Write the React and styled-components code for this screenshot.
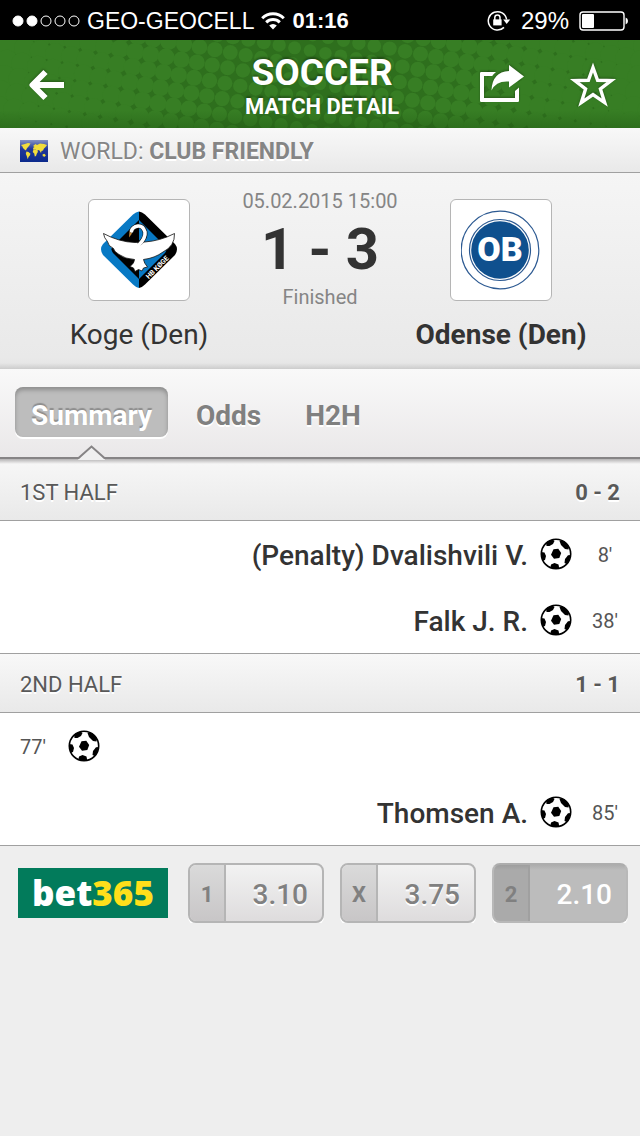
import styled, { createGlobalStyle, css } from "styled-components";

const GlobalStyle = createGlobalStyle`
  * {
    box-sizing: border-box;
  }
  body {
    margin: 0;
    background: #eeeeee;
    font-family: Roboto, "Liberation Sans", sans-serif;
    color: #333333;
  }
  button {
    font-family: inherit;
    border: 0;
    padding: 0;
    background: none;
    cursor: pointer;
  }
`;

const StatusBar = styled.div`
  display: flex;
  align-items: center;
  justify-content: space-between;
  height: 40px;
  padding: 2px 11px 0 12px;
  background: #000000;
  color: #ffffff;
  font-family: "Liberation Sans", sans-serif;
`;

const StatusGroup = styled.div`
  display: flex;
  align-items: center;
  gap: ${(props) => props.$gap}px;
  font-size: ${(props) => props.$size}px;
`;

const Clock = styled.strong`
  font-size: 22px;
`;

const Header = styled.header`
  display: grid;
  grid-template-columns: 1fr auto 1fr;
  align-items: center;
  position: relative;
  height: 88px;
  padding: 2px 22px 0 26px;
  background: #2e6f1d;
  overflow: hidden;
`;

const Halftone = styled.svg`
  position: absolute;
  inset: 0;
  width: 100%;
  height: 100%;
`;

const HeaderTitle = styled.h1`
  position: relative;
  margin: 0;
  padding-top: 6px;
  text-align: center;
  color: #ffffff;
  font-size: 37px;
  line-height: 38px;
  font-weight: 700;
  text-shadow: 0 -2px 2px rgba(0, 0, 0, 0.3);
`;

const HeaderSubtitle = styled.span`
  display: block;
  font-size: 22px;
  line-height: 30px;
  font-weight: 700;
`;

const HeaderActions = styled.div`
  display: flex;
  justify-content: ${(props) => (props.$end ? "flex-end" : "flex-start")};
  gap: 44px;
  position: relative;
`;

const IconButton = styled.button`
  display: flex;
  align-items: center;
  filter: drop-shadow(0 -1px 1px rgba(0, 0, 0, 0.3));
`;

const barGradient = css`
  background: linear-gradient(#f8f8f8, #e9e9e9);
  border-bottom: 1px solid #a0a0a0;
  text-shadow: 0 2px 0 #ffffff;
`;

const League = styled.div`
  ${barGradient}
  display: flex;
  align-items: center;
  gap: 12px;
  height: 45px;
  padding: 2px 20px 0;
  color: #858585;
  font-size: 23px;
`;

const Match = styled.section`
  display: grid;
  grid-template-columns: 1fr 160px 1fr;
  height: 196px;
  padding: 14px 38px 0;
  background: linear-gradient(#f5f5f5, #e9e9e9 94%, #e6e6e6 97%, #cccccc);
`;

const Team = styled.div`
  display: flex;
  flex-direction: column;
  align-items: center;
  padding-top: 12px;
  gap: 14px;
  white-space: nowrap;
  font-size: 28px;
  line-height: 40px;
  font-weight: ${(props) => (props.$winner ? 700 : 400)};
`;

const Crest = styled.div`
  display: flex;
  align-items: center;
  justify-content: center;
  width: 102px;
  height: 102px;
  background: #ffffff;
  border: 1px solid #b5b5b5;
  border-radius: 6px;
`;

const Result = styled.div`
  display: flex;
  flex-direction: column;
  align-items: center;
  white-space: nowrap;
  color: #858585;
  font-size: 20px;
  line-height: 28px;
`;

const Score = styled.strong`
  color: #333333;
  font-size: 58px;
  line-height: 68px;
`;

const Tabs = styled.nav`
  display: flex;
  align-items: flex-start;
  gap: 28px;
  position: relative;
  height: 90px;
  padding: 18px 15px 0;
  background: linear-gradient(#f9f9f9, #eae8e9);
  border-bottom: 2px solid #868485;
`;

const Tab = styled.button`
  height: 50px;
  padding: ${(props) => (props.$active ? "6px 16px 0" : "6px 0 0")};
  margin-right: ${(props) => (props.$active ? 0 : 16)}px;
  border-radius: 8px;
  color: #808080;
  font-size: 28px;
  font-weight: 700;
  text-shadow: 0 2px 0 #ffffff;
  ${(props) =>
    props.$active &&
    css`
      color: #ffffff;
      background: #bdbdbd;
      box-shadow: inset 0 3px 4px rgba(0, 0, 0, 0.25), 0 2px 0 #ffffff;
      text-shadow: 0 -2px 1px rgba(0, 0, 0, 0.25);
    `}
`;

const TabPointer = styled.svg`
  position: absolute;
  left: 76px;
  bottom: -6px;
`;

const HalfBar = styled.h2`
  ${barGradient}
  display: flex;
  align-items: center;
  justify-content: space-between;
  height: ${(props) => (props.$first ? 62 : 60)}px;
  margin: 0;
  padding: ${(props) => (props.$first ? 5 : 2)}px 20px 0;
  color: #595959;
  font-size: 22px;
  font-weight: 400;
  ${(props) =>
    props.$first
      ? css`
          background: linear-gradient(#b4b2b3, #f6f6f6 5px, #e9e9e9);
        `
      : css`
          border-top: 1px solid #a0a0a0;
        `}
`;

const Events = styled.ul`
  margin: 0;
  padding: 0;
  list-style: none;
  background: #ffffff;
`;

const EventRow = styled.li`
  display: flex;
  flex-direction: ${(props) => (props.$away ? "row-reverse" : "row")};
  align-items: center;
  height: 66px;
  padding: 0 20px;
  gap: 12px;
`;

const Minute = styled.span`
  width: ${(props) => (props.$away ? 30 : 36)}px;
  margin-left: ${(props) => (props.$away ? 6 : 0)}px;
  padding-top: 2px;
  text-align: ${(props) => (props.$away ? "center" : "left")};
  color: #555555;
  font-size: 20px;
`;

const Player = styled.span`
  padding-top: 2px;
  font-size: 28px;
  font-weight: 500;
`;

const Odds = styled.section`
  display: flex;
  align-items: center;
  gap: 16px;
  padding: 17px 12px 0 18px;
  border-top: 1px solid #a0a0a0;
`;

const Bookmaker = styled.a`
  display: flex;
  align-items: center;
  justify-content: center;
  flex: none;
  width: 150px;
  height: 50px;
  margin-right: 4px;
  background: #027b5b;
  color: #ffffff;
  font-family: "Open Sans", "Noto Sans", sans-serif;
  font-size: 35px;
  font-weight: 800;
  line-height: 48px;
  text-decoration: none;
`;

const BookmakerAccent = styled.span`
  color: #ffdf1b;
`;

const OddButton = styled.button`
  display: flex;
  flex: 1;
  height: 60px;
  overflow: hidden;
  border: 2px solid #b5b5b5;
  border-radius: 8px;
  background: linear-gradient(#f2f2f2, #dedcdd);
  box-shadow: 0 2px 0 #ffffff;
  color: #808080;
  text-shadow: 0 2px 0 #ffffff;
  ${(props) =>
    props.$picked &&
    css`
      border-color: #adadad #b8b8b8 #b8b8b8;
      background: linear-gradient(#adadad, #bcbcbc 5px);
      color: #ffffff;
      text-shadow: none;
    `}
`;

const OddLabel = styled.span`
  display: flex;
  align-items: center;
  justify-content: center;
  width: 36px;
  height: 100%;
  padding-top: 2px;
  border-right: 2px solid ${(props) => (props.$picked ? "#a0a0a0" : "#b5b5b5")};
  background: ${(props) =>
    props.$picked
      ? "linear-gradient(#9e9e9e, #aaaaaa 5px)"
      : "linear-gradient(#dadada, #c8c6c7)"};
  color: #808080;
  font-size: 22px;
  font-weight: 700;
  text-shadow: none;
`;

const OddValue = styled.span`
  flex: 1;
  padding: 2px 14px 0 0;
  text-align: right;
  align-self: center;
  font-size: 28px;
  font-weight: 500;
`;

// Rotated square lattice, dots grow towards the sides until they merge
const dots = [];
for (let i = -26; i <= 26; i++) {
  for (let j = -10; j <= 10; j++) {
    const x = 320 + i * 15.4 - j * 2.7;
    const y = 44 + i * 2.7 + j * 15.4;
    if (x > -12 && x < 652 && y > -12 && y < 100) {
      const d = Math.abs(x - 320) / 320;
      dots.push({ x, y, r: 6.2 + 4.9 * Math.pow(d, 1.1) });
    }
  }
}

const HeaderPattern = () => (
  <Halftone viewBox="0 0 640 88" preserveAspectRatio="xMidYMid slice" aria-hidden="true">
    <defs>
      <linearGradient id="shade" x1="0" y1="0" x2="0" y2="1">
        <stop offset="0.8" stopColor="#1d5210" stopOpacity="0" />
        <stop offset="1" stopColor="#1d5210" stopOpacity="0.35" />
      </linearGradient>
    </defs>
    {dots.map((dot) => (
      <circle key={`${dot.x}-${dot.y}`} cx={dot.x} cy={dot.y} r={dot.r} fill="#377e24" />
    ))}
    <rect width="640" height="88" fill="url(#shade)" />
  </Halftone>
);

const SignalDots = () => (
  <svg width="68" height="12" viewBox="0 0 68 12" fill="#fff" stroke="#fff">
    <circle cx="6" cy="6" r="5" />
    <circle cx="20" cy="6" r="5" />
    <circle cx="34" cy="6" r="5" fill="none" />
    <circle cx="48" cy="6" r="5" fill="none" />
    <circle cx="62" cy="6" r="5" fill="none" />
  </svg>
);

const WifiIcon = () => (
  <svg width="24" height="18" viewBox="0 0 24 18" fill="none" stroke="#fff" strokeWidth="3">
    <path d="M1.2 6.2a15.4 15.4 0 0 1 21.6 0" />
    <path d="M5.2 10.4a9.7 9.7 0 0 1 13.6 0" />
    <path d="M12 17.6 8.2 13.6a5.5 5.5 0 0 1 7.6 0z" fill="#fff" stroke="none" />
  </svg>
);

const LockIcon = () => (
  <svg width="24" height="22" viewBox="0 0 24 22" fill="none" stroke="#fff" strokeWidth="1.5">
    <path d="M19.6 9.5A9.2 9.2 0 1 0 17 17.4" />
    <path d="M16.2 9.5h7L19.7 14z" fill="#fff" stroke="none" />
    <rect x="6.2" y="9.4" width="8.4" height="6" fill="#fff" stroke="none" />
    <path d="M7.8 10V7.6a2.6 2.6 0 0 1 5.2 0V10" />
  </svg>
);

const BatteryIcon = () => (
  <svg width="50" height="20" viewBox="0 0 50 20">
    <rect x="1" y="1" width="44" height="18" rx="3" fill="none" stroke="#fff" strokeWidth="1.4" />
    <rect x="3" y="3" width="12" height="14" rx="1" fill="#fff" />
    <path d="M46.6 6.5q2.4.6 2.4 3.5t-2.4 3.5z" fill="#fff" />
  </svg>
);

const BackIcon = () => (
  <svg width="40" height="36" viewBox="0 0 40 36" fill="none" stroke="#fff" strokeWidth="6">
    <path d="M7 18h31" />
    <path d="M19.5 5 6.500 18l13 13" strokeLinejoin="round" />
  </svg>
);

const ShareIcon = () => (
  <svg width="46" height="40" viewBox="0 0 46 40">
    <path
      d="M18 7H3.200A1.200 1.200 0 0 0 2 8.200v27.600A1.200 1.200 0 0 0 3.200 37h36.600a1.200 1.200 0 0 0 1.200-1.200V22.500l-4 3.600V33H6V11h8.200Q15.500 8.800 18 7z"
      fill="#fff"
    />
    <path d="M31 0 46 11.500 31 22.500v-6q-13-1-17.500 9Q14 7 31 6z" fill="#fff" />
  </svg>
);

const StarIcon = () => (
  <svg width="50" height="48" viewBox="0 0 50 48">
    <path
      d="M25 6.500 29.600 19.300 43.200 19.600 32.400 27.900 36.700 41.600 25 33.600 13.300 41.600 17.600 27.900 6.800 19.600 20.400 19.300z"
      fill="none"
      stroke="#fff"
      strokeWidth="3.4"
    />
  </svg>
);

const WorldFlag = () => (
  <svg width="28" height="22" viewBox="0 0 28 22">
    <defs>
      <linearGradient id="sea" x1="0" y1="0" x2="0" y2="1">
        <stop offset="0" stopColor="#8793c4" />
        <stop offset="0.4" stopColor="#22389a" />
        <stop offset="1" stopColor="#0b2a8c" />
      </linearGradient>
    </defs>
    <rect width="28" height="22" fill="url(#sea)" />
    <g fill="#f2dc3c">
      <path d="M1 5l3-.8L8 3l2.500.5L9 6 8 7 6.500 9 6 10.500l-1.500-1L3 8 2.500 6.500z" />
      <path d="M6.500 11.500l2 .5 2 1.800-.7 1.700-1.300 1.500-.7 2.200-1-3-1-2.500z" />
      <path d="M13 6l2.500-2 1.500 1 3-1.500 4 .5 3 1-1.500 2-1.500 1.500-1 2-1.500.5-.5 2-1.500-2.500-1.200-.5-1.300 1-1.500-1.500-2 .3-.5-1.800 1.500-1z" />
      <path d="M13.500 9.500l3 .3 1.500 2-1.200 2-.8 2.200-1.200.5-.6-3-1.500-1.500z" />
      <path d="M22.500 14.500l1.800-.8 1.500 1.500-1 1.500-2-.5z" />
    </g>
  </svg>
);

const KogeCrest = () => (
  <svg width="80" height="80" viewBox="0 0 80 80" role="img" aria-label="HB Koge">
    <path d="M40 1.500Q37 2 34 4.500L4 34Q0 39 4 45L34 74.500Q37 77.500 40 78z" fill="#0879c4" />
    <path d="M40 1.500Q43 2 46 4.500L76 34Q80 39 76 45L46 74.500Q43 77.500 40 78z" fill="#000" />
    <path d="M40 10V69L14 43Q11 39 14 36z" fill="#000" />
    <path d="M40 10V69L66 43Q69 39 66 36z" fill="#0879c4" />
    <path
      d="M4.500 23.500Q20 32 36 32.500L45.500 32Q61 31 75.500 23.500Q76 36 64 42Q56 48 44.500 49.500Q45 53 48.500 57L44.500 58 43 61 39.500 59.500 36 61.500 34.500 58 31 56.500Q35.500 53 35.500 49.500Q26 49 20 44.500Q15 41.500 14.500 38.500Q9 36 8.500 31.500Q5 28 4.500 23.500z"
      fill="#fff"
      stroke="#111"
      strokeWidth="0.8"
    />
    <g fill="none" strokeLinecap="round">
      <path d="M41 33Q47 28 46 22Q44 15.500 39 16Q33.500 17 32.500 21" stroke="#111" strokeWidth="4.800" />
      <path d="M39 36Q47 28 46 22Q44 15.500 39 16Q33.500 17 32.500 21" stroke="#fff" strokeWidth="3.600" />
    </g>
    <path d="M30.500 21.500l2.500 2-3 4z" fill="#c98b3a" />
    <text
      x="60"
      y="59"
      fill="#fff"
      fontSize="7"
      fontWeight="700"
      textAnchor="middle"
      transform="rotate(-45 60 59)"
    >
      HB KØGE
    </text>
  </svg>
);

const OdenseCrest = () => (
  <svg width="80" height="80" viewBox="0 0 80 80" role="img" aria-label="OB">
    <g fill="none" stroke="#2d5a92">
      <circle cx="39" cy="40" r="38.8" strokeWidth="1.2" />
      <circle cx="39" cy="40" r="30.5" strokeWidth="1.2" />
    </g>
    <circle cx="39" cy="40" r="28.8" fill="#0f508e" />
    <text x="39" y="51" fill="#fff" fontFamily="Roboto" fontSize="34" fontWeight="900" textAnchor="middle">
      OB
    </text>
  </svg>
);

const Ball = () => (
  <svg width="32" height="32" viewBox="0 0 32 32" role="img" aria-label="Goal">
    <defs>
      <clipPath id="ball">
        <circle cx="16" cy="16" r="15" />
      </clipPath>
    </defs>
    <circle cx="16" cy="16" r="14.5" fill="#fff" />
    <g fill="#000" clipPath="url(#ball)">
      <path d="M13.500 11.200 18.300 10.800 21.200 15 19.300 20 14 20.800 11 16.800z" />
      <path d="M6 4 12 1l2.500 2-1.500 3-3.500 2-3 0z" />
      <path d="M19.500 3l4-2 5.500 7-.5 3.500-3.500-.5-4-4z" />
      <path d="M0 14l4.500.5 1.500 3.500-1 4L2 23z" />
      <path d="M31 17l-3 .2-3 3.800-.5 4 3 1.500z" />
      <path d="M10.500 29l.5-2.500 3.500-1.500 4 1.500.5 2.500V31H10z" />
    </g>
    <circle cx="16" cy="16" r="14.7" fill="none" stroke="#000" strokeWidth="1.6" />
  </svg>
);

const halves = [
  {
    name: "1ST HALF",
    score: "0 - 2",
    events: [
      { minute: "8'", player: "(Penalty) Dvalishvili V.", away: true },
      { minute: "38'", player: "Falk J. R.", away: true },
    ],
  },
  {
    name: "2ND HALF",
    score: "1 - 1",
    events: [
      { minute: "77'", player: "", away: false },
      { minute: "85'", player: "Thomsen A.", away: true },
    ],
  },
];

const odds = [
  { label: "1", value: "3.10" },
  { label: "X", value: "3.75" },
  { label: "2", value: "2.10", picked: true },
];

const App = () => {
  return (
    <>
      <GlobalStyle />
      <StatusBar>
        <StatusGroup $gap={7} $size={23}>
          <SignalDots />
          <span>GEO-GEOCELL</span>
          <WifiIcon />
          <Clock>01:16</Clock>
        </StatusGroup>
        <StatusGroup $gap={10} $size={24}>
          <LockIcon />
          <span>29%</span>
          <BatteryIcon />
        </StatusGroup>
      </StatusBar>
      <Header>
        <HeaderPattern />
        <HeaderActions>
          <IconButton aria-label="Back">
            <BackIcon />
          </IconButton>
        </HeaderActions>
        <HeaderTitle>
          SOCCER
          <HeaderSubtitle>MATCH DETAIL</HeaderSubtitle>
        </HeaderTitle>
        <HeaderActions $end>
          <IconButton aria-label="Share">
            <ShareIcon />
          </IconButton>
          <IconButton aria-label="Add to favourites">
            <StarIcon />
          </IconButton>
        </HeaderActions>
      </Header>
      <main>
        <League>
          <WorldFlag />
          <span>
            WORLD: <strong>CLUB FRIENDLY</strong>
          </span>
        </League>
        <Match>
          <Team>
            <Crest>
              <KogeCrest />
            </Crest>
            Koge (Den)
          </Team>
          <Result>
            <span>05.02.2015 15:00</span>
            <Score>1 - 3</Score>
            <span>Finished</span>
          </Result>
          <Team $winner>
            <Crest>
              <OdenseCrest />
            </Crest>
            Odense (Den)
          </Team>
        </Match>
        <Tabs>
          <Tab $active>Summary</Tab>
          <Tab>Odds</Tab>
          <Tab>H2H</Tab>
          <TabPointer width="32" height="18" viewBox="0 0 32 18">
            <path d="M2 14.500 15.500 2 29 14.500V15H2z" fill="#f0f0f0" />
            <path d="M2 13.500 15.500 1.500 29 13.500" fill="none" stroke="#868485" strokeWidth="2" />
          </TabPointer>
        </Tabs>
        {halves.map((half, index) => (
          <section key={half.name}>
            <HalfBar $first={index === 0}>
              <span>{half.name}</span>
              <strong>{half.score}</strong>
            </HalfBar>
            <Events>
              {half.events.map((event) => (
                <EventRow key={event.minute} $away={event.away}>
                  <Minute $away={event.away}>{event.minute}</Minute>
                  <Ball />
                  <Player>{event.player}</Player>
                </EventRow>
              ))}
            </Events>
          </section>
        ))}
        <Odds>
          <Bookmaker href="#bet365">
            bet<BookmakerAccent>365</BookmakerAccent>
          </Bookmaker>
          {odds.map((odd) => (
            <OddButton key={odd.label} $picked={odd.picked}>
              <OddLabel $picked={odd.picked}>{odd.label}</OddLabel>
              <OddValue>{odd.value}</OddValue>
            </OddButton>
          ))}
        </Odds>
      </main>
    </>
  );
};

export default App;
